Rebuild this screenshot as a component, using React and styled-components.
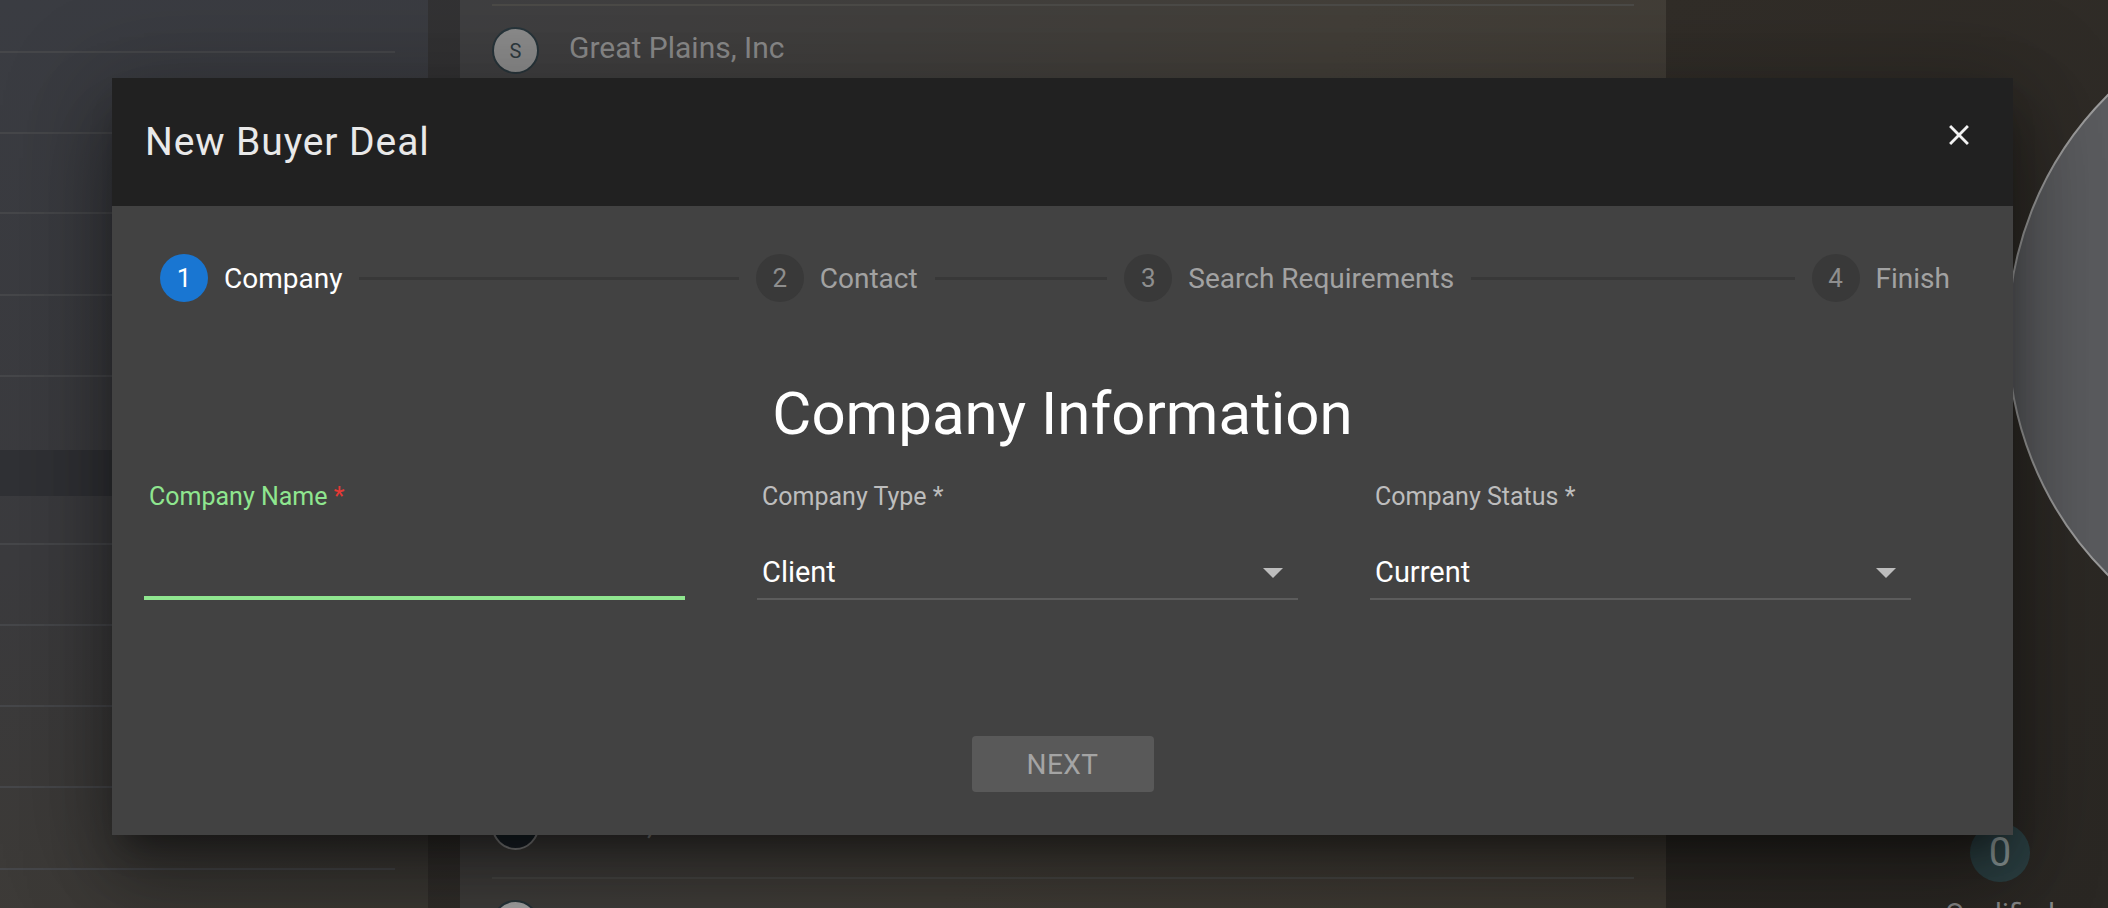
import React from "react";
import styled, { createGlobalStyle } from "styled-components";

const GlobalStyle = createGlobalStyle`
  html, body {
    margin: 0;
    padding: 0;
    background: #2e2c28;
    font-family: Roboto, "Liberation Sans", Arial, sans-serif;
  }
  * { box-sizing: border-box; }
`;

// ---------- page behind the dialog ----------

const Page = styled.div`
  position: relative;
  width: 2108px;
  height: 908px;
  overflow: hidden;
  display: flex;
  background: linear-gradient(135deg, #333438 0%, #312d28 55%, #2b2824 100%);
`;

const Sidebar = styled.div`
  width: 428px;
  height: 100%;
  display: flex;
  flex-direction: column;
  background: linear-gradient(165deg, #3a3c42 0%, #3b3b3e 55%, #3d3a35 100%);
`;

const SideRow = styled.div`
  height: ${(p) => p.h}px;
  flex-shrink: 0;
  margin-right: 33px;
  border-bottom: ${(p) => (p.line ? "2px solid #46474a" : "none")};
`;

const SideBand = styled.div`
  height: 46px;
  flex-shrink: 0;
  background: #303135;
`;

const Middle = styled.div`
  margin-left: 32px;
  width: 1206px;
  height: 100%;
  padding: 4px 32px 0;
  background: linear-gradient(115deg, #3f3f41 0%, #433f39 55%, #403b34 100%);
`;

const ListItem = styled.div`
  height: 97px;
  border-top: 2px solid #4b4a47;
  padding-top: 21px;
  display: flex;
  align-items: flex-start;
  gap: 30px;
`;

const Avatar = styled.div`
  width: 47px;
  height: 47px;
  border-radius: 50%;
  flex-shrink: 0;
  display: flex;
  align-items: center;
  justify-content: center;
  background: ${(p) => (p.tone === "dark" ? "#1b232a" : p.tone === "light" ? "#a9a9a9" : "#8c8c8c")};
  border: 2px solid ${(p) => (p.tone === "dark" ? "#8a8a8a" : "#28353b")};
  color: #2f3a3f;
  font-size: 20px;
`;

const ItemName = styled.div`
  font-size: 30px;
  line-height: 41px;
  color: #8b8b8b;
`;

const RightPanel = styled.div`
  flex: 1;
  height: 100%;
  display: flex;
  flex-direction: column;
`;

const ChartSvg = styled.svg`
  display: block;
  flex-shrink: 0;
`;

const Stat = styled.div`
  margin-top: 23px;
  margin-left: 264px;
  width: 140px;
  display: flex;
  flex-direction: column;
  align-items: center;
  gap: 18px;
`;

const StatBadge = styled.div`
  width: 60px;
  height: 59px;
  border-radius: 50%;
  background: #2d4245;
  color: #8f9b9b;
  font-size: 40px;
  line-height: 59px;
  text-align: center;
`;

const StatLabel = styled.div`
  font-size: 28px;
  line-height: 28px;
  color: #8a8a8a;
`;

// ---------- dialog ----------

const Backdrop = styled.div`
  position: absolute;
  inset: 0;
  display: flex;
  align-items: flex-start;
  padding: 78px 0 0 112px;
`;

const Dialog = styled.div`
  width: 1901px;
  background: #424242;
  box-shadow: 0 22px 30px -14px rgba(0, 0, 0, 0.4),
    0 48px 76px 6px rgba(0, 0, 0, 0.26), 0 18px 92px 16px rgba(0, 0, 0, 0.22);
`;

const Header = styled.div`
  height: 128px;
  background: #212121;
  display: flex;
  align-items: center;
  justify-content: space-between;
  padding: 0 37px 0 33px;
`;

const Title = styled.h2`
  margin: 0;
  font-size: 39px;
  line-height: 38px;
  font-weight: 400;
  letter-spacing: 0.9px;
  color: #e9e9e9;
`;

const CloseButton = styled.button`
  border: 0;
  padding: 0;
  background: none;
  margin-bottom: 14px;
  display: flex;
  color: #f2f2f2;
`;

const Body = styled.div`
  padding: 48px 103px 43px 32px;
  display: flex;
  flex-direction: column;
`;

const Stepper = styled.div`
  display: flex;
  align-items: center;
  margin: 0 -40px 0 16px;
`;

const Step = styled.div`
  display: flex;
  align-items: center;
  gap: 16px;
  flex-shrink: 0;
`;

const StepCircle = styled.div`
  width: 48px;
  height: 48px;
  border-radius: 50%;
  background: ${(p) => (p.active ? "#1976d2" : "#393939")};
  color: ${(p) => (p.active ? "#ffffff" : "#8e8e8e")};
  font-size: 26px;
  line-height: 48px;
  text-align: center;
`;

const StepLabel = styled.span`
  font-size: 28px;
  color: ${(p) => (p.active ? "#ffffff" : "#a2a2a2")};
`;

const Connector = styled.div`
  flex: ${(p) => p.grow} 1 0;
  height: 3px;
  margin: 0 17px;
  background: #383838;
`;

const Heading = styled.h1`
  margin: 82px 0 0 0;
  padding-left: 71px;
  font-size: 60px;
  line-height: 60px;
  font-weight: 400;
  color: #ffffff;
  text-align: center;
`;

const FieldGrid = styled.div`
  margin-top: 40px;
  display: grid;
  grid-template-columns: repeat(3, 541px);
  column-gap: 72px;
`;

const Field = styled.div`
  display: flex;
  flex-direction: column;
`;

const FieldLabel = styled.label`
  padding-left: 5px;
  font-size: 25px;
  line-height: 25px;
  color: ${(p) => (p.focused ? "#8fe68f" : "#bdbdbd")};
`;

const Required = styled.span`
  color: ${(p) => (p.focused ? "#e53935" : "inherit")};
`;

const InputBox = styled.div`
  margin-top: 49px;
  padding: 0 15px ${(p) => (p.focused ? 9 : 11)}px 5px;
  border-bottom: ${(p) => (p.focused ? "4px solid #8fe68f" : "2px solid #5c5c5c")};
  display: flex;
  align-items: center;
  justify-content: space-between;
`;

const TextInput = styled.input`
  flex: 1;
  height: 29px;
  border: 0;
  padding: 0;
  outline: none;
  background: transparent;
  color: #fff;
  font-family: inherit;
  font-size: 29px;
`;

const SelectValue = styled.span`
  font-size: 29px;
  line-height: 29px;
  color: #ffffff;
`;

const Arrow = styled.span`
  width: 0;
  height: 0;
  border-left: 10px solid transparent;
  border-right: 10px solid transparent;
  border-top: 10px solid #bdbdbd;
`;

const Actions = styled.div`
  margin-top: 136px;
  padding-left: 71px;
  display: flex;
  justify-content: center;
`;

const NextButton = styled.button`
  width: 182px;
  height: 56px;
  border: 0;
  border-radius: 4px;
  background: #595959;
  color: #a4a4a4;
  font-family: inherit;
  font-size: 28px;
  font-weight: 400;
  letter-spacing: 0.5px;
  text-transform: uppercase;
`;

const sideRows = [
  { h: 53, line: true },
  { h: 81, line: true },
  { h: 80, line: true },
  { h: 82, line: true },
  { h: 81, line: true },
  { h: 73, line: false },
];
const sideRowsAfter = [
  { h: 49, line: true },
  { h: 81, line: true },
  { h: 81, line: true },
  { h: 81, line: true },
  { h: 82, line: true },
];

const companies = [
  { name: "Great Plains, Inc", letter: "S" },
  { name: "Northwind Traders", letter: "N" },
  { name: "Contoso Ltd", letter: "C" },
  { name: "Fabrikam, Inc", letter: "F" },
  { name: "Litware Group", letter: "L" },
  { name: "Tailspin Toys", letter: "T" },
  { name: "Adventure Works", letter: "A" },
  { name: "Wingtip Partners", letter: "W" },
  { name: "Brand, Inc", letter: "B", tone: "dark" },
  { name: "", letter: "", tone: "light" },
];

const steps = [
  { label: "Company" },
  { label: "Contact", grow: 380 },
  { label: "Search Requirements", grow: 173 },
  { label: "Finish", grow: 324 },
];

function CloseIcon() {
  return (
    <svg width="34" height="34" viewBox="0 0 24 24" fill="currentColor">
      <path d="M19 6.41 17.59 5 12 10.59 6.41 5 5 6.41 10.59 12 5 17.59 6.41 19 12 13.41 17.59 19 19 17.59 13.41 12z" />
    </svg>
  );
}

export default function App() {
  return (
    <>
      <GlobalStyle />
      <Page>
        <Sidebar>
          {sideRows.map((r, i) => (
            <SideRow key={i} h={r.h} line={r.line} />
          ))}
          <SideBand />
          {sideRowsAfter.map((r, i) => (
            <SideRow key={i} h={r.h} line={r.line} />
          ))}
        </Sidebar>

        <Middle>
          {companies.map((c, i) => (
            <ListItem key={i}>
              <Avatar tone={c.tone}>{c.letter}</Avatar>
              {c.name && <ItemName>{c.name}</ItemName>}
            </ListItem>
          ))}
        </Middle>

        <RightPanel>
          <ChartSvg width="442" height="800" viewBox="0 0 442 800">
            <circle cx="680" cy="335" r="338" fill="#5b5c5f" stroke="#9c9c9c" strokeWidth="2" />
          </ChartSvg>
          <Stat>
            <StatBadge>0</StatBadge>
            <StatLabel>Qualified</StatLabel>
          </Stat>
        </RightPanel>

        <Backdrop>
          <Dialog>
            <Header>
              <Title>New Buyer Deal</Title>
              <CloseButton aria-label="close">
                <CloseIcon />
              </CloseButton>
            </Header>
            <Body>
              <Stepper>
                {steps.map((s, i) => (
                  <React.Fragment key={s.label}>
                    {i > 0 && <Connector grow={s.grow} />}
                    <Step>
                      <StepCircle active={i === 0}>{i + 1}</StepCircle>
                      <StepLabel active={i === 0}>{s.label}</StepLabel>
                    </Step>
                  </React.Fragment>
                ))}
              </Stepper>

              <Heading>Company Information</Heading>

              <FieldGrid>
                <Field>
                  <FieldLabel focused>
                    Company Name <Required focused>*</Required>
                  </FieldLabel>
                  <InputBox focused>
                    <TextInput />
                  </InputBox>
                </Field>
                <Field>
                  <FieldLabel>
                    Company Type <Required>*</Required>
                  </FieldLabel>
                  <InputBox>
                    <SelectValue>Client</SelectValue>
                    <Arrow />
                  </InputBox>
                </Field>
                <Field>
                  <FieldLabel>
                    Company Status <Required>*</Required>
                  </FieldLabel>
                  <InputBox>
                    <SelectValue>Current</SelectValue>
                    <Arrow />
                  </InputBox>
                </Field>
              </FieldGrid>

              <Actions>
                <NextButton disabled>Next</NextButton>
              </Actions>
            </Body>
          </Dialog>
        </Backdrop>
      </Page>
    </>
  );
}
